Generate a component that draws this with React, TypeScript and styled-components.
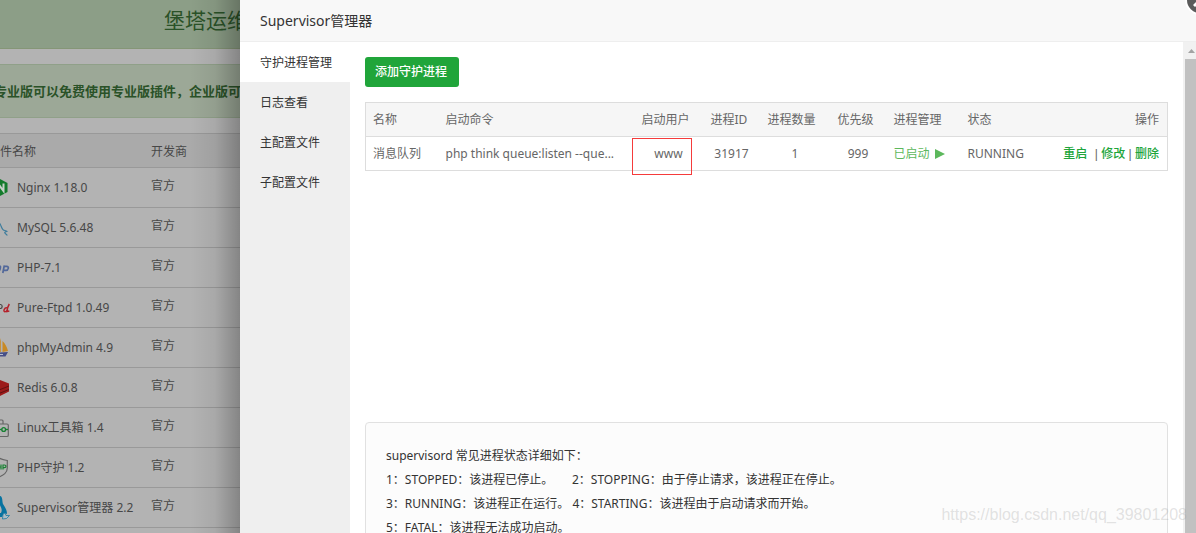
import React from 'react';
import styled, { createGlobalStyle } from 'styled-components';

const Global = createGlobalStyle`
  * { box-sizing: border-box; }
  html, body { margin: 0; overflow: hidden; }
  body, button, table { font-family: "Noto Sans", "Noto Sans CJK SC", sans-serif; font-size: 12px; }
`;

const Page = styled.div`
  position: relative;
  display: grid;
  grid-template-columns: 240px minmax(0, 1fr);
  height: 100vh;
  overflow: hidden;
`;

const Backdrop = styled.div`
  position: relative;
  overflow: hidden;
  background: #b3b3b3;
  color: #474747;
  &::after {
    content: "";
    position: absolute;
    inset: 0 0 0 auto;
    width: 50px;
    background: linear-gradient(to right, transparent, rgba(0, 0, 0, 0.06) 50%, rgba(0, 0, 0, 0.26));
  }
`;

const Hero = styled.header`
  height: 49px;
  padding: 8px 0 0 164px;
  background: #8c9e87;
  border-bottom: 1px solid #859677;
  color: #2a5228;
  font-size: 21px;
  line-height: 24px;
  white-space: nowrap;
`;

const Notice = styled.p`
  display: flex;
  justify-content: flex-end;
  margin: 15px 0;
  padding: 14px 0;
  width: 254px;
  background: #9ca897;
  border: solid #90a089;
  border-width: 1px 0;
  color: #2a5228;
  font-size: 13px;
  font-weight: 700;
  line-height: 24px;
  white-space: nowrap;
`;

const SoftTable = styled.table`
  width: 100%;
  border-collapse: collapse;
  table-layout: fixed;
  border-top: 1px solid #999;
  th, td { padding: 0; height: 40px; border-bottom: 1px solid #999; font-weight: 400; text-align: left; white-space: nowrap; }
  th { height: 34px; background: #aaa; }
  td + td { padding-bottom: 6px; }
`;

const SoftName = styled.span`
  display: flex;
  align-items: center;
  gap: 1px;
  line-height: 20px;
  svg { flex: none; margin-bottom: 2px; }
`;

const Dialog = styled.section`
  display: flex;
  flex-direction: column;
  min-width: 0;
  background: #fff;
`;

const DialogTitle = styled.h1`
  margin: 0;
  padding: 0 20px;
  height: 42px;
  border-bottom: 1px solid #eee;
  background: #f8f8f8;
  color: #333;
  font-size: 14px;
  font-weight: 400;
  line-height: 41px;
`;

const DialogBody = styled.div`
  flex: 1;
  display: grid;
  grid-template-columns: 110px minmax(0, 1fr) 13px;
  min-height: 0;
`;

const Tabs = styled.nav`
  display: flex;
  flex-direction: column;
  background: #efefef;
`;

const Tab = styled.button<{ $active?: boolean }>`
  height: 40px;
  padding: 2px 0 0 20px;
  border: 0;
  background: ${p => (p.$active ? '#fff' : 'transparent')};
  color: #333;
  text-align: left;
  line-height: 38px;
`;

const Content = styled.main`
  display: flex;
  flex-direction: column;
  align-items: flex-start;
  padding: 15px;
  min-height: 0;
`;

const AddButton = styled.button`
  flex: none;
  height: 30px;
  padding: 0 12px 0 10px;
  border: 0;
  border-radius: 3px;
  background: #20a53a;
  color: #fff;
  font-weight: 500;
  line-height: 30px;
`;

const ProcessTable = styled.table`
  width: 100%;
  margin-top: 15px;
  border: 1px solid #ddd;
  border-collapse: collapse;
  table-layout: fixed;
  color: #666;
  th, td { height: 34px; padding: 0 8px 0 7px; border-bottom: 1px solid #ddd; font-weight: 400; text-align: left; white-space: nowrap; line-height: 18px; }
  th { background: #f6f6f6; }
`;

const Col = styled.col<{ $w?: number }>`
  width: ${p => (p.$w ? p.$w + 'px' : 'auto')};
`;

const Cell = styled.td<{ $center?: boolean }>`
  && { text-align: ${p => (p.$center ? 'center' : 'left')}; }
`;

const Started = styled.a`
  display: flex;
  align-items: center;
  gap: 5px;
  color: #5cb85c;
  text-decoration: none;
`;

const RightHead = styled.th`
  && { text-align: right; }
`;

const Actions = styled.td`
  && { text-align: right; }
  font-family: "Liberation Sans", "Noto Sans CJK SC", sans-serif;
  a { color: #20a53a; font-weight: 500; text-decoration: none; }
  a:first-child { margin-right: 4px; }
`;

const Highlight = styled.span`
  position: absolute;
  left: 632px;
  top: 138px;
  width: 60px;
  height: 37px;
  border: 1px solid #f53b3b;
`;

const Help = styled.section`
  flex: none;
  width: 100%;
  margin-top: 251px;
  padding: 21px 20px;
  height: 160px;
  border: 1px solid #e1e1e1;
  border-radius: 4px;
  background: #fcfcfc;
  color: #333;
  line-height: 24px;
  p { margin: 0; white-space: pre; }
`;

const Scrollbar = styled.div`
  display: flex;
  flex-direction: column;
  background: #f1f1f1;
  svg { flex: none; }
  &::after { content: ""; flex: 1; margin-left: 2px; background: #c1c1c1; }
`;

const Close = styled.button`
  position: absolute;
  right: -19px;
  top: -15px;
  width: 30px;
  height: 30px;
  padding: 0;
  border: 2px solid #fff;
  border-radius: 50%;
  background: #5b5b5b;
  svg { display: block; margin: 6px; }
`;

const Watermark = styled.span`
  position: absolute;
  right: 9px;
  bottom: 8px;
  color: rgba(160, 160, 160, 0.3);
  font-family: "Liberation Sans", Arial, sans-serif;
  font-size: 16px;
  line-height: 20px;
`;

const Icon = ({ children }: { children: React.ReactNode }) => (
  <svg width="16" height="26" viewBox="0 0 16 26" aria-hidden="true">{children}</svg>
);

const icons = {
  nginx: <Icon><path d="M-7 9 0 5l7.500 4v9L0 22l-7-4z" fill="#137a2b" /><path d="M-2 17.500V9.500L3.500 17V9.500" fill="none" stroke="#c5d0c7" strokeWidth="2" /></Icon>,
  mysql: <Icon><path d="M-1 8.500C1 10 1.500 15 3.300 16c1 .7 2.700.3 3.700 1.300-1 .5-2.300.5-2.300 1.300 0 1 1.600 1 2.600 2.900" fill="none" stroke="#3d7c9c" strokeWidth="1.200" /></Icon>,
  php: <Icon><path d="M-2 12h1.500c1.500 0 1 1.500.2 4.500M4.300 11.500 2.800 19M4.300 12.300h2.500c2.500 0 1.700 4-.8 4H3.600" fill="none" stroke="#52689a" strokeWidth="1.700" /></Icon>,
  ftp: <Icon><path d="M-1 10.500h1.500c2.200 0 2.200 4 0 4H-1" fill="none" stroke="#444" strokeWidth="1.200" /><path d="M9.300 10C8 12 7.300 15 7 17.500l2.300-.5M7.300 14c-3-1-4.500 4-2.300 3.700 1 0 2-1.200 2.300-2" fill="none" stroke="#b5212b" strokeWidth="1.500" /></Icon>,
  pma: <Icon><path d="M.8 4v14H-3zM2.500 7c3 3 4.500 6 5.500 10l-5.500 1z" fill="#c98a25" /><path d="M-1 18.500 8 18l-2.500 4.500H-1z" fill="#464f87" /><path d="M-1 20.500h4" stroke="#b9bccb" /></Icon>,
  redis: <Icon><path d="M-1 5.500 9 9.500v8l-10 5z" fill="#9c1b1b" /><path d="m-1 16 10-4M-1 19.500l10-4" stroke="#611212" /></Icon>,
  box: <Icon><path d="M-1 10h8q1.300 0 1.300 1.300v9.900q0 1.300-1.300 1.300h-8M-1 6h3q1 0 1 1v3" fill="none" stroke="#656565" strokeWidth="1.200" /><path d="M-1 15.500H8" stroke="#178132" strokeWidth="1.300" /><circle cx="3.700" cy="15.500" r="1.900" fill="#b3b3b3" stroke="#178132" strokeWidth="1.400" /></Icon>,
  guard: <Icon><path d="M-1 4c3 1.700 5 2 8.300 2.500V14c0 5-4 7-8 9" fill="none" stroke="#656565" strokeWidth="1.200" /><path d="M-1 13h2.500M1 10.500v5M3 15.500v-4.500h1.500c2 0 2 2.700 0 2.700H3" fill="none" stroke="#178132" strokeWidth="1.200" /></Icon>,
  linux: <Icon><path d="M-1 2c4-1 3 5 4 8 2 3 4 6 4 10l-3-1-2 4h-3v-4h2c2-4-1-7-2-10z" fill="#0873a0" /><path d="m3 20 2-1 1 2.500 3.500 0-3 3-4 .5z" fill="#aebdc4" stroke="#0873a0" strokeWidth=".7" /></Icon>,
};

const software: [keyof typeof icons, string][] = [
  ['nginx', 'Nginx 1.18.0'], ['mysql', 'MySQL 5.6.48'], ['php', 'PHP-7.1'],
  ['ftp', 'Pure-Ftpd 1.0.49'], ['pma', 'phpMyAdmin 4.9'], ['redis', 'Redis 6.0.8'],
  ['box', 'Linux工具箱 1.4'], ['guard', 'PHP守护 1.2'], ['linux', 'Supervisor管理器 2.2'],
];

const tabs = ['守护进程管理', '日志查看', '主配置文件', '子配置文件'];
const heads = ['名称', '启动命令', '启动用户', '进程ID', '进程数量', '优先级', '进程管理', '状态'];
const widths = [73, 196, 69, 57, 70, 56, 74, 80];

export default function App() {
  return (
    <Page>
      <Global />
      <Backdrop>
        <Hero>堡塔运维</Hero>
        <Notice>专业版可以免费使用专业版插件，企业版可以</Notice>
        <SoftTable>
          <colgroup><Col $w={151} /><Col /></colgroup>
          <thead><tr><th>件名称</th><th>开发商</th></tr></thead>
          <tbody>
            {software.map(([icon, name]) => (
              <tr key={name}><td><SoftName>{icons[icon]}{name}</SoftName></td><td>官方</td></tr>
            ))}
          </tbody>
        </SoftTable>
      </Backdrop>
      <Dialog>
        <DialogTitle>Supervisor管理器</DialogTitle>
        <DialogBody>
          <Tabs>{tabs.map((t, i) => <Tab key={t} $active={i === 0}>{t}</Tab>)}</Tabs>
          <Content>
            <AddButton>添加守护进程</AddButton>
            <ProcessTable>
              <colgroup>{widths.map((w, i) => <Col key={i} $w={w} />)}<Col /></colgroup>
              <thead><tr>{heads.map(h => <th key={h}>{h}</th>)}<RightHead>操作</RightHead></tr></thead>
              <tbody>
                <tr>
                  <td>消息队列</td>
                  <Cell>php think queue:listen --que...</Cell>
                  <Cell $center>www</Cell>
                  <Cell $center>31917</Cell>
                  <Cell $center>1</Cell>
                  <Cell $center>999</Cell>
                  <td><Started href="#">已启动<svg width="10" height="10" viewBox="0 0 10 10"><path d="M0 0 10 5 0 10z" fill="#5cb85c" /></svg></Started></td>
                  <Cell>RUNNING</Cell>
                  <Actions><a href="#">重启</a> | <a href="#">修改</a> | <a href="#">删除</a></Actions>
                </tr>
              </tbody>
            </ProcessTable>
            <Help>
              <p>supervisord 常见进程状态详细如下：</p>
              <p>{'1：STOPPED：该进程已停止。      2：STOPPING：由于停止请求，该进程正在停止。'}</p>
              <p>{'3：RUNNING：该进程正在运行。 4：STARTING：该进程由于启动请求而开始。'}</p>
              <p>5：FATAL：该进程无法成功启动。</p>
            </Help>
          </Content>
          <Scrollbar><svg width="13" height="17" viewBox="0 0 13 17"><path d="M5 11 8.500 7l3.500 4z" fill="#a3a3a3" /></svg></Scrollbar>
        </DialogBody>
      </Dialog>
      <Highlight />
      <Close aria-label="关闭"><svg width="14" height="14" viewBox="0 0 14 14"><path d="m1 1 12 12M13 1 1 13" stroke="#fff" strokeWidth="3" /></svg></Close>
      <Watermark>https://blog.csdn.net/qq_39801208</Watermark>
    </Page>
  );
}
